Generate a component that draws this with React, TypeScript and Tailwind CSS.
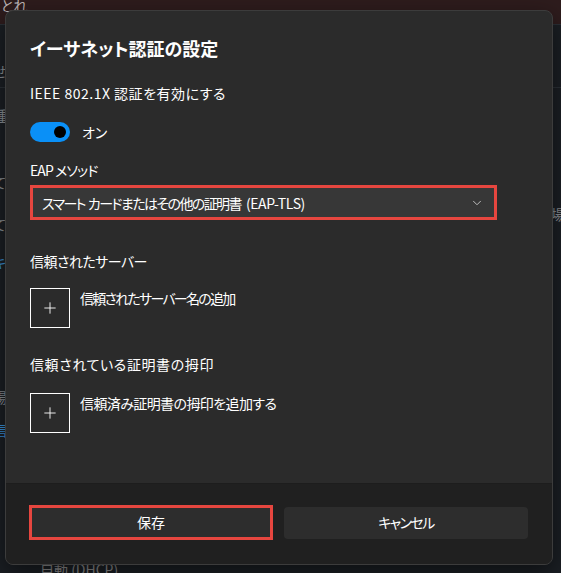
import { ChevronDown, Plus } from "lucide-react";

const font = "font-['Noto_Sans_CJK_JP','Noto_Sans',sans-serif] [font-feature-settings:'palt']";

const AddRow = ({ label, track }: { label: string; track: string }) => (
  <div className="flex items-start gap-[10px]">
    <div className="flex h-[40px] w-[40px] items-center justify-center border border-white">
      <Plus size={18} strokeWidth={1.2} className="text-white" />
    </div>
    <span className={`text-[14px] leading-[20px] text-white ${track}`}>{label}</span>
  </div>
);

const App = () => {
  return (
    <div className={`relative h-[573px] w-[561px] overflow-hidden bg-[#1b1f24] ${font}`}>
      {/* page behind the dialog */}
      <div className="h-[24px] bg-[#2e1c1d] pl-[1px] text-[14px] leading-[10px] text-[#bdb5b5]">
        とれ
      </div>
      <div className="border-t border-[#2b3036]">
        <div className="ml-[-7px] flex flex-col text-[14px] leading-[20px] text-[#8a8e93]">
          <span className="mt-[36px]">せ</span>
          <div className="mt-[6px] border-t border-[#2b3036]" />
          <span className="mt-[17px]">種</span>
          <span className="mt-[47px]">て</span>
          <span className="mt-[22px]">て</span>
          <span className="mt-[18px] text-[#3a8fd6]">キ</span>
          <span className="mt-[115px]">場</span>
          <span className="mt-[13px] text-[#3a8fd6]">信</span>
        </div>
      </div>
      <div className="absolute right-[-18px] top-[204px] text-[14px] leading-[20px] text-[#8a8e93]">
        場合
      </div>
      <div className="absolute left-[40px] top-[559px] text-[14px] leading-[20px] text-[#8a8a8a]">
        自動 (DHCP)
      </div>

      {/* dialog */}
      <div className="absolute left-[5px] top-[10px] flex h-[555px] w-[548px] flex-col overflow-hidden rounded-[8px] border border-[#3c3c3c] bg-[#2b2b2b] shadow-[0_8px_24px_rgba(0,0,0,0.5)]">
        <div className="flex-1 pl-[24px] pt-[23px]">
          <h2 className="text-[18px] font-bold leading-[28px] text-white">
            イーサネット認証の設定
          </h2>
          <p className="mt-[21px] text-[14px] leading-[20px] tracking-[0.5px] text-white">
            IEEE 802.1X 認証を有効にする
          </p>
          <div className="mt-[19px] flex items-center gap-[12px]">
            <div className="flex h-[20px] w-[40px] items-center justify-end rounded-full bg-[#0a90f7] pr-[4px]">
              <div className="h-[12px] w-[12px] rounded-full bg-black" />
            </div>
            <span className="text-[14px] leading-[20px] text-white">オン</span>
          </div>
          <p className="mt-[18px] text-[14px] leading-[20px] tracking-[-0.9px] text-white">
            EAP メソッド
          </p>
          <div className="mt-[5px] flex h-[35px] w-[467px] items-center justify-between border-[3px] border-[#e6463f] bg-[#373737] pl-[9px] pr-[10px]">
            <span className="flex items-center gap-[5px] text-[14px] leading-[20px] text-white">
              <span className="tracking-[-1.6px]">スマート&nbsp;&nbsp;カードまたはその他の証明書</span>
              <span className="tracking-[-0.4px]">(EAP-TLS)</span>
            </span>
            <ChevronDown size={14} strokeWidth={1.5} className="text-[#cfcfcf]" />
          </div>
          <p className="mt-[31px] text-[14px] leading-[20px] tracking-[-0.55px] text-white">
            信頼されたサーバー
          </p>
          <div className="mt-[17px]">
            <AddRow label="信頼されたサーバー名の追加" track="tracking-[-1.75px]" />
          </div>
          <p className="mt-[26px] text-[14px] leading-[20px] tracking-[0.6px] text-white">
            信頼されている証明書の拇印
          </p>
          <div className="mt-[19px]">
            <AddRow label="信頼済み証明書の拇印を追加する" track="tracking-[-0.6px]" />
          </div>
        </div>
        <div className="grid h-[81px] grid-cols-2 items-center gap-[11px] border-t border-[#1d1d1d] bg-[#202020] pb-[3px] pl-[23px] pr-[24px]">
          <button className="h-[35px] border-[3px] border-[#e6463f] bg-[#2d2d2d] text-[14px] text-white">
            保存
          </button>
          <button className="h-[32px] rounded-[4px] bg-[#2d2d2d] text-[14px] tracking-[-1.6px] text-white">
            キャンセル
          </button>
        </div>
      </div>
    </div>
  );
};

export default App;
